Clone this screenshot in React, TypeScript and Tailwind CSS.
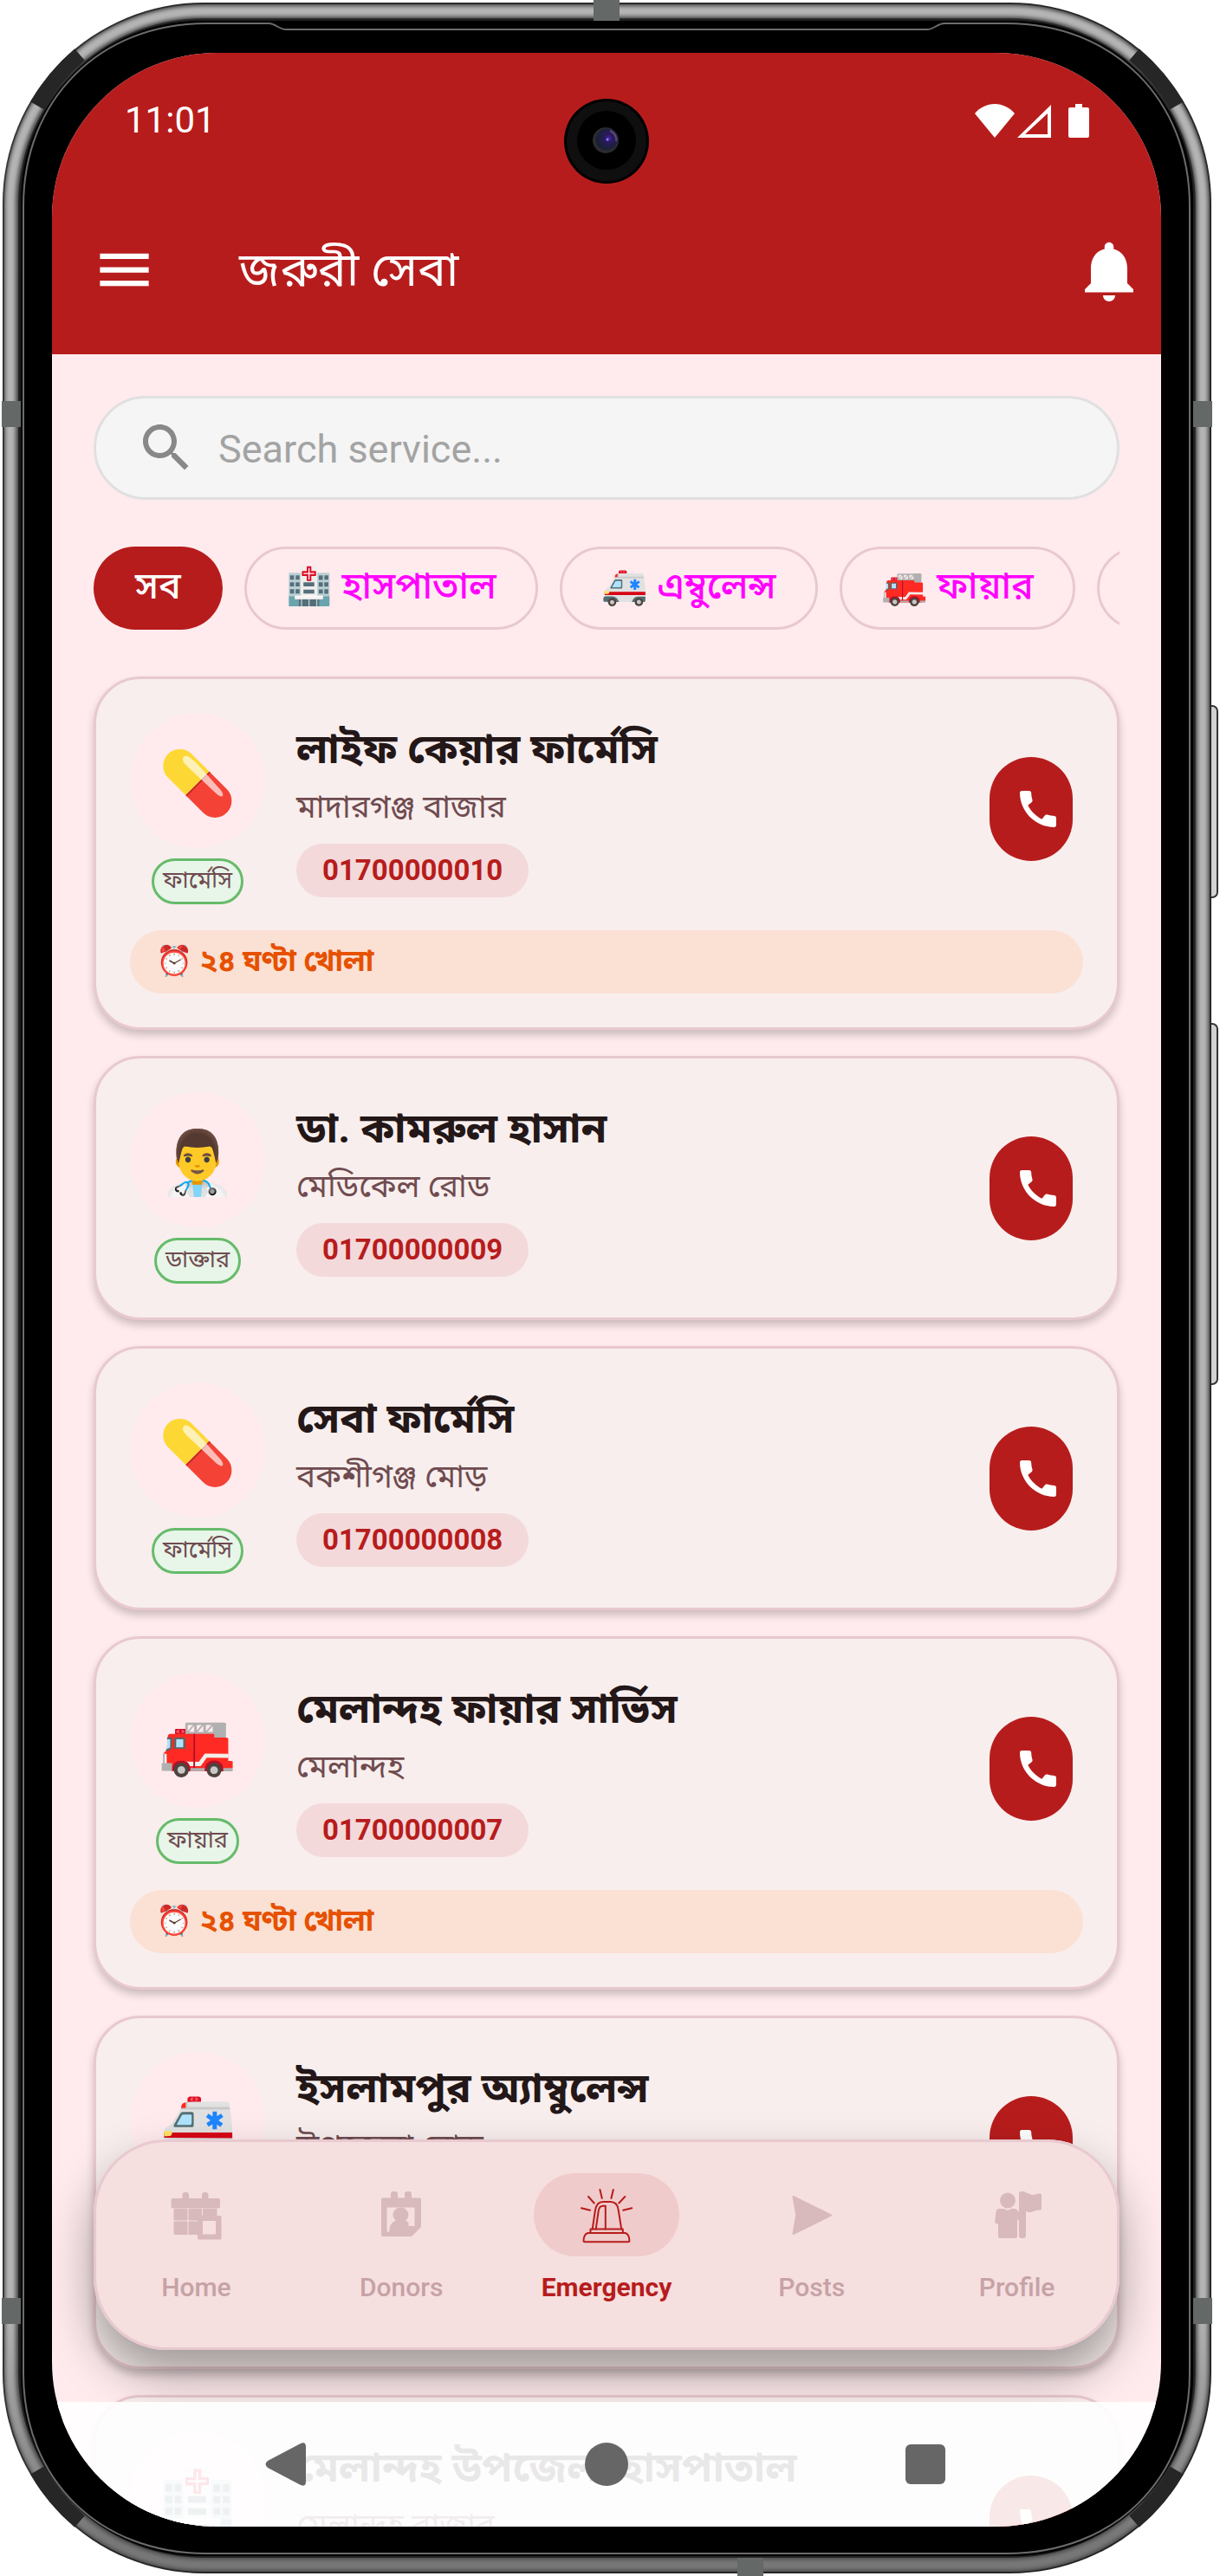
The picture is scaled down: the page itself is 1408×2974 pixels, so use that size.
import { useState } from "react";
import type { ReactNode } from "react";

type Service = {
  id: number;
  name: string;
  address: string;
  phone: string;
  icon: string;
  category: string;
  open24: boolean;
};

const services: Service[] = [
  { id: 1, name: "লাইফ কেয়ার ফার্মেসি", address: "মাদারগঞ্জ বাজার", phone: "01700000010", icon: "💊", category: "ফার্মেসি", open24: true },
  { id: 2, name: "ডা. কামরুল হাসান", address: "মেডিকেল রোড", phone: "01700000009", icon: "👨‍⚕️", category: "ডাক্তার", open24: false },
  { id: 3, name: "সেবা ফার্মেসি", address: "বকশীগঞ্জ মোড়", phone: "01700000008", icon: "💊", category: "ফার্মেসি", open24: false },
  { id: 4, name: "মেলান্দহ ফায়ার সার্ভিস", address: "মেলান্দহ", phone: "01700000007", icon: "🚒", category: "ফায়ার", open24: true },
  { id: 5, name: "ইসলামপুর অ্যাম্বুলেন্স", address: "উপজেলা রোড", phone: "01700000006", icon: "🚑", category: "এম্বুলেন্স", open24: true },
  { id: 6, name: "মেলান্দহ উপজেলা হাসপাতাল", address: "মেলান্দহ বাজার", phone: "01700000005", icon: "🏥", category: "হাসপাতাল", open24: true },
];

const filters = ["সব", "🏥 হাসপাতাল", "🚑 এম্বুলেন্স", "🚒 ফায়ার", "💊 ফার্মেসি"];

const HomeIcon = () => (
  <svg viewBox="0 0 66 66" className="size-[66px]" fill="currentColor">
    <rect x="17.5" y="7" width="7.5" height="12" rx="3" />
    <rect x="40" y="7" width="7.5" height="12" rx="3" />
    <rect x="4.5" y="14" width="56.5" height="11.5" rx="2" />
    <rect x="7.5" y="26" width="16" height="13.5" rx="1" />
    <rect x="24.5" y="26" width="15.5" height="13.5" rx="1" />
    <path d="M41 26h16.500v9H41z" />
    <path d="M7.500 40.500h16V56h-14a2 2 0 0 1-2-2zM24.500 40.500h11V56h-11z" />
    <path fillRule="evenodd" d="M36 34h25a1.500 1.500 0 0 1 1.500 1.500V60a1.500 1.500 0 0 1-1.500 1.500H36.500A1.500 1.500 0 0 1 35 60V35zM41 40v15.500h15V40z" />
  </svg>
);

const DonorsIcon = () => (
  <svg viewBox="0 0 66 66" className="size-[66px]" fill="currentColor">
    <rect x="21" y="6" width="8" height="12" rx="3" />
    <rect x="37" y="6" width="8" height="12" rx="3" />
    <path fillRule="evenodd" d="M12 13.500h42a2 2 0 0 1 2 2V47L45 58H12a2 2 0 0 1-2-2V15.500a2 2 0 0 1 2-2zM16.500 24.500v28H41V46h7.500V24.500z" />
    <ellipse cx="32.500" cy="33" rx="9" ry="8.500" />
    <path d="M28 39h9l4.500 3v11.500h-22V50c0-6 4-9 8.500-11z" />
  </svg>
);

const SirenIcon = () => (
  <svg viewBox="0 0 66 66" className="size-[66px]" fill="none" stroke="currentColor" strokeWidth="2" strokeLinecap="round" strokeLinejoin="round">
    <path d="M4 25.300l10 2.500M12 12l6.700 7.500M25.400 4l2.400 10M40.800 4l-2.400 10M54.300 12l-7 7.500M62.200 25.300l-10 2.500" />
    <path d="M16.700 49.500l3.300-22c1-6 4-9.500 9-9.500h8.500c5 0 8.500 3.500 9.200 9.500l3.500 22" />
    <path d="M20.700 49.500l3-21c.6-4 2.300-5.800 5-5.800h3.100v26.800" />
    <path d="M14.500 49.500h37.300v4.500H14.500z" />
    <path d="M11.500 54h43.200c3 1 4.700 4 4.700 9 0 .8-.5 1.300-1.300 1.300H7.800c-.8 0-1.300-.5-1.300-1.300 0-5 2-8 5-9z" />
  </svg>
);

const PostsIcon = () => (
  <svg viewBox="0 0 66 66" className="size-[66px]" fill="currentColor" stroke="currentColor" strokeWidth="2" strokeLinejoin="round">
    <path d="M11.500 12L53 32.500H15zM11.500 55L15 34.500h38z" />
    <path d="M40 33.500h16" />
  </svg>
);

const ProfileIcon = () => (
  <svg viewBox="0 0 66 66" className="size-[66px]" fill="currentColor">
    <ellipse cx="22" cy="16.500" rx="9" ry="9" />
    <path d="M12 26h5.500l4.500 2 4.500-2h3c2.500 0 4.500 2 5.500 4.500l3 8-2.500 2-2.500-3V58c0 1-1 2-2 2h-7.500c-1 0-1.500-.5-1.500-1.500 0 1-.5 1.500-1.500 1.500H13c-1 0-2-1-2-2V44l-4-2 1.500-12c.3-2 1.500-4 3.500-4z" />
    <rect x="35" y="6" width="8" height="54" rx="3" />
    <path d="M42 8c4-1.500 5 2 9 2 3 0 5-2 8.500-1.500.9.1 1.500.8 1.500 1.500v16c0 .8-.7 1.500-1.500 1.500-3.500 0-6 .5-9 2-2 1-6 .5-8.500-1z" />
  </svg>
);

const tabs: { label: string; icon: ReactNode }[] = [
  { label: "Home", icon: <HomeIcon /> },
  { label: "Donors", icon: <DonorsIcon /> },
  { label: "Emergency", icon: <SirenIcon /> },
  { label: "Posts", icon: <PostsIcon /> },
  { label: "Profile", icon: <ProfileIcon /> },
];

function ServiceCard({ service }: { service: Service }) {
  return (
    <li className="rounded-[54px] border-[3px] border-[#e8c9cf] bg-[#f8eeed] p-[39px] shadow-[0_6px_10px_rgba(0,0,0,0.2)]">
      <div className="flex items-center">
        <div className="flex w-[156px] shrink-0 flex-col items-center gap-3">
          <span className="flex size-[156px] items-center justify-center rounded-full bg-[#ffebee] pt-2 text-[72px] leading-none">
            {service.icon}
          </span>
          <span className="flex h-[53px] items-center rounded-full border-[3px] border-[#66bb6a] bg-[#e8f5e9] px-[10px] pb-0.5 text-[27px] leading-none whitespace-nowrap text-[#6f4b50]">
            {service.category}
          </span>
        </div>

        <div className="ml-9 flex min-w-0 flex-1 flex-col items-start">
          <h2 className="text-[48px] leading-[66px] font-bold text-[#231718]">{service.name}</h2>
          <p className="text-[37px] leading-[68px] text-[#6f4b50]">{service.address}</p>
          <span className="mt-2 flex h-[62px] items-center rounded-full bg-[#f4d9db] px-[30px] text-[33px] leading-none font-bold text-[#b71c1c]">
            {service.phone}
          </span>
        </div>

        <button
          aria-label="Call"
          className="mr-3 flex h-[120px] w-24 shrink-0 items-center justify-center rounded-full bg-[#b71c1c] pl-4 text-white"
        >
          <svg viewBox="0 0 24 24" className="size-[56px]" fill="currentColor">
            <path d="M20.010 15.380c-1.230 0-2.420-.2-3.530-.56-.35-.12-.74-.03-1.010.24l-1.570 1.970c-2.830-1.350-5.480-3.900-6.890-6.830l1.950-1.660c.27-.28.35-.67.24-1.020-.37-1.110-.56-2.300-.56-3.530 0-.54-.45-.99-.99-.99H4.190C3.650 3 3 3.240 3 3.990 3 13.280 10.730 21 20.010 21c.71 0 .99-.63.99-1.180v-3.450c0-.54-.45-.99-.99-.99z" />
          </svg>
        </button>
      </div>

      {service.open24 && (
        <p className="mt-[30px] flex h-[73px] items-center rounded-full bg-[#fbe0d4] px-[30px] pb-1 text-[34px] leading-none font-bold text-[#e65100]">
          ⏰ ২৪ ঘণ্টা খোলা
        </p>
      )}
    </li>
  );
}

// Metal rim, antenna bands, side keys
function PhoneFrame() {
  return (
    <svg
      viewBox="0 0 1408 2974"
      preserveAspectRatio="none"
      aria-hidden="true"
      className="absolute inset-0 size-full"
    >
      <defs>
        <linearGradient id="rim" x1="0" y1="0" x2="0" y2="1">
          <stop offset="0" stopColor="#b4b4b4" />
          <stop offset="0.9" stopColor="#b4b4b4" />
          <stop offset="0.99" stopColor="#777" />
        </linearGradient>
        <filter id="soft" x="-5%" y="-5%" width="110%" height="110%">
          <feGaussianBlur stdDeviation="2" />
        </filter>
      </defs>

      {/* Side keys */}
      <rect x="1385" y="815" width="20" height="221" rx="6" fill="#d2d2d2" stroke="#333" strokeWidth="2" />
      <rect x="1385" y="1182" width="20" height="416" rx="6" fill="#d2d2d2" stroke="#333" strokeWidth="2" />

      <rect x="3" y="3" width="1395" height="2968" rx="232" fill="#1c1c1c" />
      <rect x="13" y="13" width="1375" height="2948" rx="222" fill="none" stroke="#4a4a4a" strokeWidth="16" />
      <rect x="12" y="13" width="1376" height="2948" rx="222" fill="none" stroke="url(#rim)" strokeWidth="12" filter="url(#soft)" />

      {/* Dark reflections on the corners */}
      <g fill="none" stroke="#262626" strokeWidth="18">
        <path d="M43 122A223 223 0 0 1 92 63" />
        <path d="M1358 122A223 223 0 0 0 1309 63" />
        <path d="M43 2852A223 223 0 0 0 92 2911" />
        <path d="M1358 2852A223 223 0 0 1 1309 2911" />
      </g>

      {/* Antenna bands */}
      <g fill="#646866">
        <rect x="685" y="0" width="30" height="25" />
        <rect x="851" y="2953" width="30" height="21" />
        <rect x="2" y="463" width="23" height="30" />
        <rect x="1376" y="463" width="23" height="30" />
        <rect x="2" y="2653" width="23" height="30" />
        <rect x="1376" y="2653" width="23" height="30" />
      </g>

      <rect x="24" y="24" width="1353" height="2927" rx="208" fill="#000" />
      <path
        d="M27 1500V238C27 115 115 27 238 27h72c8 0 12 7 20 7h740c8 0 12-7 20-7h72c123 0 211 88 211 211v2502c0 123-88 208-211 208H238C115 2948 27 2863 27 2740z"
        fill="none"
        stroke="#6c6c6c"
        strokeWidth="2"
      />
    </svg>
  );
}

function Camera() {
  return (
    <svg viewBox="0 0 98 98" aria-hidden="true" className="absolute top-[53px] left-1/2 size-[98px] -translate-x-1/2">
      <defs>
        <radialGradient id="lens" cx="0.6" cy="0.45" r="0.6">
          <stop offset="0" stopColor="#4a2aa8" />
          <stop offset="0.3" stopColor="#2a1a5c" />
          <stop offset="1" stopColor="#16222f" />
        </radialGradient>
      </defs>
      <circle cx="49" cy="49" r="49" fill="#000" />
      <circle cx="49" cy="49" r="46" fill="#0f0f0f" />
      <circle cx="49" cy="48" r="34" fill="#000" />
      <circle cx="48" cy="48" r="15" fill="#2c2c2e" />
      <circle cx="49" cy="47" r="12.500" fill="url(#lens)" />
      <path d="M53 37c5 2 8 7 7 12" fill="none" stroke="#7d5a9c" strokeWidth="2" opacity="0.7" />
      <circle cx="50" cy="47" r="1.500" fill="#8f7bff" />
    </svg>
  );
}

export default function App() {
  const [filter, setFilter] = useState("সব");
  const [tab, setTab] = useState("Emergency");
  const [query, setQuery] = useState("");

  return (
    <div className="relative flex h-screen bg-white pt-[61px] pr-[68px] pb-[57px] pl-[60px] font-['Roboto','Noto_Sans_Bengali',sans-serif]">
      <PhoneFrame />

      <div className="relative flex min-w-0 flex-1 flex-col overflow-hidden rounded-[190px] bg-[#ffebee]">
        <header className="shrink-0 bg-[#b71c1c] text-white">
          {/* Status bar */}
          <div className="flex h-[156px] items-center justify-between pr-[83px] pl-[84px]">
            <span className="text-[42px] leading-none">11:01</span>
            <svg viewBox="0 0 132 39" className="h-[39px] w-[132px]" fill="currentColor">
              <path d="M23 39L0 11C6 4 14 0 23 0s17 4 23 11z" />
              <path fillRule="evenodd" d="M88 1v38H49zM84 11L58 35h26z" />
              <path d="M116 0h8v4h6q2 0 2 2v31q0 2-2 2h-20q-2 0-2-2V6q0-2 2-2h6z" />
            </svg>
          </div>

          <div className="flex h-48 items-center pr-[18px] pl-[46px]">
            <button aria-label="Menu" className="pb-1">
              <svg viewBox="0 0 24 24" className="size-[75px]" fill="currentColor">
                <path d="M3 18h18v-2H3v2zm0-5h18v-2H3v2zm0-7v2h18V6H3z" />
              </svg>
            </button>
            <h1 className="ml-[95px] flex-1 pb-1 text-[55px] leading-[72px]">জরুরী সেবা</h1>
            <button aria-label="Notifications">
              <svg viewBox="0 0 24 24" className="size-[84px]" fill="currentColor">
                <path d="M12 22c1.100 0 2-.9 2-2h-4c0 1.100.89 2 2 2zm6-6v-5c0-3.070-1.640-5.640-4.500-6.320V4c0-.83-.67-1.500-1.500-1.500s-1.500.67-1.500 1.500v.68C7.630 5.360 6 7.920 6 11v5l-2 2v1h16v-1l-2-2z" />
              </svg>
            </button>
          </div>
        </header>
        <Camera />

        <main className="flex min-h-0 flex-1 flex-col px-12 pt-12">
          {/* Search */}
          <label className="flex h-[120px] shrink-0 items-center gap-6 rounded-full border-[3px] border-[#e0e0e0] bg-[#f5f5f5] pr-12 pl-[45px]">
            <svg viewBox="0 0 24 24" className="size-[72px] shrink-0 text-[#888]" fill="currentColor">
              <path d="M15.500 14h-.79l-.28-.27C15.410 12.590 16 11.110 16 9.500 16 5.910 13.090 3 9.500 3S3 5.910 3 9.500 5.910 16 9.500 16c1.610 0 3.090-.59 4.230-1.570l.27.28v.79l5 4.990L20.490 19l-4.990-5zm-6 0C7.010 14 5 11.990 5 9.500S7.010 5 9.500 5 14 7.010 14 9.500 11.990 14 9.500 14z" />
            </svg>
            <input
              value={query}
              onChange={(e) => setQuery(e.target.value)}
              placeholder="Search service..."
              aria-label="Search service"
              className="min-w-0 flex-1 bg-transparent pt-1 text-[45px] text-[#444] outline-none placeholder:text-[#a3a3a3]"
            />
          </label>

          {/* Category filters */}
          <div className="mt-[54px] flex shrink-0 gap-[25px] overflow-hidden">
            {filters.map((f) => (
              <button
                key={f}
                onClick={() => setFilter(f)}
                className={
                  f === filter
                    ? "h-24 shrink-0 rounded-full bg-[#b71c1c] px-12 pb-1.5 text-[43px] leading-none font-medium text-white"
                    : "h-24 shrink-0 rounded-full border-[3px] border-[#e8c9cf] px-[45px] pb-1.5 text-[43px] leading-none font-medium text-[#ff00ff]"
                }
              >
                {f}
              </button>
            ))}
          </div>

          <ul className="mt-[54px] space-y-[30px]">
            {services.map((s) => (
              <ServiceCard key={s.id} service={s} />
            ))}
          </ul>
        </main>

        {/* Tab bar */}
        <nav className="absolute inset-x-12 bottom-[204px] flex h-[243px] rounded-[84px] bg-[#f6dfdf] pt-[39px] shadow-[0_28px_54px_rgba(0,0,0,0.36)] ring-3 ring-[#e8c9cf] ring-inset">
          {tabs.map((t) => {
            const active = t.label === tab;
            return (
              <button
                key={t.label}
                onClick={() => setTab(t.label)}
                className={
                  active
                    ? "flex flex-1 basis-0 flex-col items-center text-[#b71c1c]"
                    : "flex flex-1 basis-0 flex-col items-center text-[#d8b9bc]"
                }
              >
                <span
                  className={
                    active
                      ? "flex h-24 w-[168px] items-center justify-center rounded-full bg-[#f0cbcb]"
                      : "flex h-24 w-[168px] items-center justify-center"
                  }
                >
                  {t.icon}
                </span>
                <span
                  className={
                    active
                      ? "mt-[18px] text-[30px] leading-9 font-bold"
                      : "mt-[18px] text-[30px] leading-9 font-medium text-[#c6a2a6]"
                  }
                >
                  {t.label}
                </span>
              </button>
            );
          })}
        </nav>

        {/* System navigation */}
        <div className="absolute inset-x-0 bottom-0 flex h-36 items-center justify-between bg-white/90 pr-[249px] pl-[245px] text-[#666]">
          <button aria-label="Back">
            <svg viewBox="0 0 50 50" className="size-[50px]" fill="currentColor">
              <path d="M41 1.500Q48 -2 48 5v40q0 7-7 3.500L4 29Q-1 25 4 21z" />
            </svg>
          </button>
          <button aria-label="Home screen" className="size-[50px] rounded-full bg-[#666]" />
          <button aria-label="Recents" className="size-[46px] rounded-md bg-[#666]" />
        </div>
      </div>
    </div>
  );
}
